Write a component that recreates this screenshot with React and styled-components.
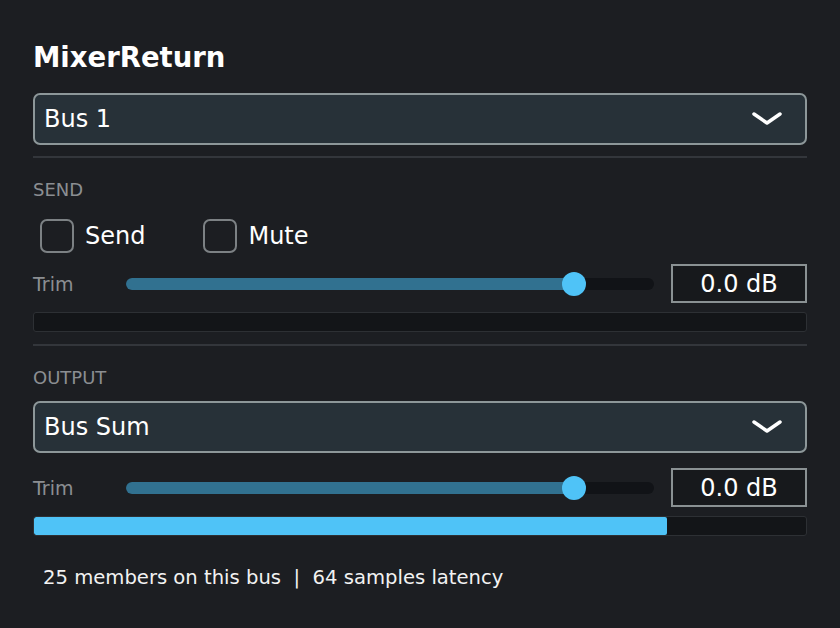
import React from 'react';
import styled, { createGlobalStyle } from 'styled-components';

const GlobalStyle = createGlobalStyle`
  html, body {
    margin: 0;
    padding: 0;
    background: #1c1e22;
  }
  * {
    box-sizing: border-box;
  }
`;

const Panel = styled.div`
  width: 840px;
  height: 628px;
  padding: 39px 33px 0 33px;
  background: #1c1e22;
  color: #f2f2f2;
  font-family: 'DejaVu Sans', 'Liberation Sans', sans-serif;
  display: flex;
  flex-direction: column;
  overflow: hidden;
`;

const Title = styled.h1`
  margin: 0;
  height: 36px;
  font-size: 27.5px;
  line-height: 36px;
  font-weight: bold;
  color: #ffffff;
`;

const Select = styled.div`
  margin-top: ${(p) => p.$top}px;
  height: 52px;
  display: flex;
  align-items: center;
  justify-content: space-between;
  padding: 0 23px 0 9px;
  background: #273138;
  border: 2px solid #8d9799;
  border-radius: 7px;
  font-size: 24px;
  color: #ffffff;
`;

const Divider = styled.div`
  margin-top: ${(p) => p.$top}px;
  height: 2px;
  background: #33363b;
`;

const SectionLabel = styled.div`
  margin-top: 22px;
  height: 20px;
  font-size: 18px;
  line-height: 20px;
  color: #8b8e92;
`;

const CheckRow = styled.div`
  margin-top: 19px;
  height: 34px;
  display: flex;
  align-items: center;
  gap: 58px;
  padding-left: 7px;
`;

const CheckItem = styled.label`
  display: flex;
  align-items: center;
  gap: 11px;
  font-size: 24px;
  color: #ffffff;
`;

const Box = styled.span`
  width: 34px;
  height: 34px;
  border: 2px solid #7c8184;
  border-radius: 7px;
`;

const TrimRow = styled.div`
  margin-top: ${(p) => p.$top}px;
  height: 39px;
  display: flex;
  align-items: center;
`;

const TrimLabel = styled.span`
  width: 93px;
  font-size: 19px;
  color: #8b8e92;
`;

const Track = styled.div`
  position: relative;
  width: 528px;
  height: 12px;
  border-radius: 6px;
  background: #111317;
`;

const TrackFill = styled.div`
  height: 100%;
  border-radius: 6px;
  background: #317190;
`;

const Thumb = styled.div`
  position: absolute;
  top: 50%;
  width: 24px;
  height: 24px;
  margin: -12px 0 0 -12px;
  border-radius: 50%;
  background: #4fc3f7;
`;

const ValueBox = styled.div`
  margin-left: auto;
  width: 136px;
  height: 39px;
  display: flex;
  align-items: center;
  justify-content: center;
  border: 2px solid #8a9193;
  background: #17191c;
  font-size: 24px;
  color: #ffffff;
`;

const Meter = styled.div`
  margin-top: 9px;
  height: 20px;
  border: 1px solid #2d3034;
  border-radius: 3px;
  background: #131518;
  overflow: hidden;
`;

const MeterFill = styled.div`
  height: 100%;
  background: #4fc3f7;
  border-radius: 2px;
`;

const Footer = styled.div`
  margin-top: 30px;
  padding-left: 10px;
  height: 24px;
  line-height: 24px;
  font-size: 19.6px;
  color: #f2f2f2;
  white-space: pre;
`;

const Chevron = () => (
  <svg width="30" height="14" viewBox="0 0 30 14">
    <path d="M2 2 L15 11 L28 2" fill="none" stroke="#ffffff" strokeWidth="3.5" strokeLinecap="round" strokeLinejoin="round" />
  </svg>
);

const Dropdown = ({ value, top }) => (
  <Select $top={top}>
    <span>{value}</span>
    <Chevron />
  </Select>
);

const Trim = ({ top, level, value }) => (
  <TrimRow $top={top}>
    <TrimLabel>Trim</TrimLabel>
    <Track>
      <TrackFill style={{ width: `${level * 100}%` }} />
      <Thumb style={{ left: `${level * 100}%` }} />
    </Track>
    <ValueBox>{value}</ValueBox>
  </TrimRow>
);

const App = () => {
  return (
    <>
      <GlobalStyle />
      <Panel>
        <Title>MixerReturn</Title>
        <Dropdown value="Bus 1" top={18} />
        <Divider $top={11} />

        <SectionLabel>SEND</SectionLabel>
        <CheckRow>
          <CheckItem>
            <Box />
            Send
          </CheckItem>
          <CheckItem>
            <Box />
            Mute
          </CheckItem>
        </CheckRow>
        <Trim top={11} level={0.848} value="0.0 dB" />
        <Meter>
          <MeterFill style={{ width: '0%' }} />
        </Meter>
        <Divider $top={12} />

        <SectionLabel>OUTPUT</SectionLabel>
        <Dropdown value="Bus Sum" top={13} />
        <Trim top={15} level={0.848} value="0.0 dB" />
        <Meter>
          <MeterFill style={{ width: '82%' }} />
        </Meter>

        <Footer>25 members on this bus  |  64 samples latency</Footer>
      </Panel>
    </>
  );
};

export default App;
